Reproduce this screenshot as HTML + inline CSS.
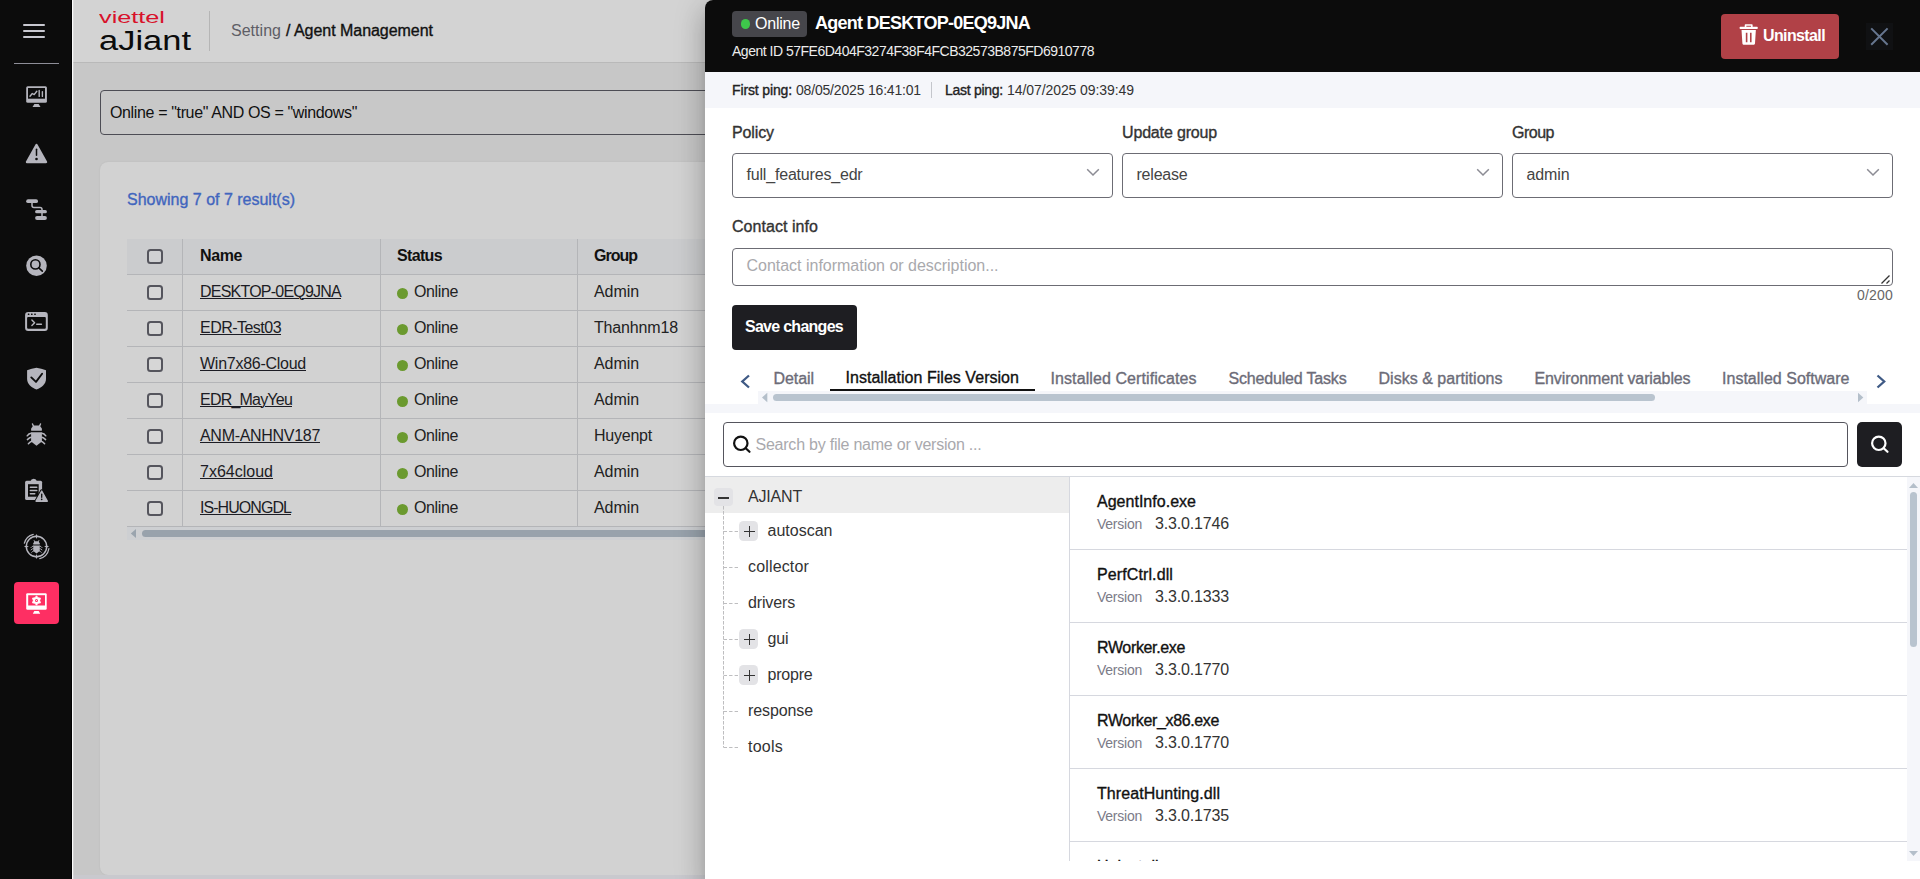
<!DOCTYPE html>
<html lang="en"><head><meta charset="utf-8"><title>Agent Management</title><style>
*{box-sizing:border-box;margin:0;padding:0}
html,body{width:1920px;height:879px;overflow:hidden}
body{position:relative;background:#c7c7c7;font-family:"Liberation Sans",sans-serif;color:#222}
.t{position:absolute;white-space:nowrap}
.a{position:absolute}
u{text-decoration:underline;text-underline-offset:1px;text-decoration-thickness:1px}
</style></head><body><div class="a" style="left:73px;top:0px;width:1847px;height:63px;background:#d3d3d3;border-bottom:1px solid #b9b9b9"></div><span class="t" style="left:99px;top:7px;font-size:17px;line-height:21px;color:#d8112a;transform-origin:0 50%;transform:scaleX(1.4858);">viettel</span><span class="t" style="left:99px;top:24px;font-size:27px;line-height:34px;color:#0b0b0b;transform-origin:0 50%;transform:scaleX(1.2767);">aJiant</span><div class="a" style="left:209px;top:11px;width:1px;height:40px;background:#b5b5b5"></div><span class="t" style="left:231px;top:21px;font-size:16px;line-height:20px;color:#5e5e66;letter-spacing:0.027px;">Setting</span><span class="t" style="left:286px;top:21px;font-size:16px;line-height:20px;color:#111;-webkit-text-stroke:0.35px #111;letter-spacing:-0.036px;">/ Agent Management</span><div class="a" style="left:100px;top:90px;width:700px;height:45px;border:1px solid #4d4d55;border-radius:4px;background:#c8c8c8"></div><span class="t" style="left:110px;top:103px;font-size:16px;line-height:20px;color:#111;letter-spacing:-0.361px;">Online = "true" AND OS = "windows"</span><div class="a" style="left:100px;top:162px;width:1900px;height:713px;background:#d2d2d2;border-radius:8px;box-shadow:0 0 2px rgba(0,0,0,0.08)"></div><span class="t" style="left:127px;top:190px;font-size:16px;line-height:20px;color:#4165be;-webkit-text-stroke:0.35px #4165be;letter-spacing:-0.003px;">Showing 7 of 7 result(s)</span><div class="a" style="left:127px;top:239px;width:700px;height:35px;background:#cbccce"></div><div class="a" style="left:127px;top:274px;width:700px;height:1px;background:#b4b5b8"></div><div class="a" style="left:127px;top:310px;width:700px;height:1px;background:#b4b5b8"></div><div class="a" style="left:127px;top:346px;width:700px;height:1px;background:#b4b5b8"></div><div class="a" style="left:127px;top:382px;width:700px;height:1px;background:#b4b5b8"></div><div class="a" style="left:127px;top:418px;width:700px;height:1px;background:#b4b5b8"></div><div class="a" style="left:127px;top:454px;width:700px;height:1px;background:#b4b5b8"></div><div class="a" style="left:127px;top:490px;width:700px;height:1px;background:#b4b5b8"></div><div class="a" style="left:127px;top:526px;width:700px;height:1px;background:#b4b5b8"></div><div class="a" style="left:182px;top:239px;width:1px;height:288px;background:#b4b5b8"></div><div class="a" style="left:380px;top:239px;width:1px;height:288px;background:#b4b5b8"></div><div class="a" style="left:577px;top:239px;width:1px;height:288px;background:#b4b5b8"></div><div class="a" style="left:147px;top:249px;width:16px;height:15px;border:2px solid #55555d;border-radius:3.5px;background:rgba(255,255,255,0.1)"></div><span class="t" style="left:200px;top:246px;font-size:16px;line-height:20px;color:#111;font-weight:700;letter-spacing:-0.395px;">Name</span><span class="t" style="left:397px;top:246px;font-size:16px;line-height:20px;color:#111;font-weight:700;letter-spacing:-0.651px;">Status</span><span class="t" style="left:594px;top:246px;font-size:16px;line-height:20px;color:#111;font-weight:700;letter-spacing:-1.000px;">Group</span><div class="a" style="left:147px;top:285px;width:16px;height:15px;border:2px solid #55555d;border-radius:3.5px;background:rgba(255,255,255,0.1)"></div><span class="t" style="left:200px;top:282px;font-size:16px;line-height:20px;color:#1c1c24;letter-spacing:-0.776px;"><u>DESKTOP-0EQ9JNA</u></span><div class="a" style="left:397px;top:287.5px;width:11px;height:11px;background:#6b9a2f;border-radius:50%"></div><span class="t" style="left:414px;top:282px;font-size:16px;line-height:20px;color:#222;letter-spacing:-0.375px;">Online</span><span class="t" style="left:594px;top:282px;font-size:16px;line-height:20px;color:#222;letter-spacing:-0.072px;">Admin</span><div class="a" style="left:147px;top:321px;width:16px;height:15px;border:2px solid #55555d;border-radius:3.5px;background:rgba(255,255,255,0.1)"></div><span class="t" style="left:200px;top:318px;font-size:16px;line-height:20px;color:#1c1c24;letter-spacing:-0.525px;"><u>EDR-Test03</u></span><div class="a" style="left:397px;top:323.5px;width:11px;height:11px;background:#6b9a2f;border-radius:50%"></div><span class="t" style="left:414px;top:318px;font-size:16px;line-height:20px;color:#222;letter-spacing:-0.375px;">Online</span><span class="t" style="left:594px;top:318px;font-size:16px;line-height:20px;color:#222;letter-spacing:-0.155px;">Thanhnm18</span><div class="a" style="left:147px;top:357px;width:16px;height:15px;border:2px solid #55555d;border-radius:3.5px;background:rgba(255,255,255,0.1)"></div><span class="t" style="left:200px;top:354px;font-size:16px;line-height:20px;color:#1c1c24;letter-spacing:-0.261px;"><u>Win7x86-Cloud</u></span><div class="a" style="left:397px;top:359.5px;width:11px;height:11px;background:#6b9a2f;border-radius:50%"></div><span class="t" style="left:414px;top:354px;font-size:16px;line-height:20px;color:#222;letter-spacing:-0.375px;">Online</span><span class="t" style="left:594px;top:354px;font-size:16px;line-height:20px;color:#222;letter-spacing:-0.072px;">Admin</span><div class="a" style="left:147px;top:393px;width:16px;height:15px;border:2px solid #55555d;border-radius:3.5px;background:rgba(255,255,255,0.1)"></div><span class="t" style="left:200px;top:390px;font-size:16px;line-height:20px;color:#1c1c24;letter-spacing:-0.791px;"><u>EDR_MayYeu</u></span><div class="a" style="left:397px;top:395.5px;width:11px;height:11px;background:#6b9a2f;border-radius:50%"></div><span class="t" style="left:414px;top:390px;font-size:16px;line-height:20px;color:#222;letter-spacing:-0.375px;">Online</span><span class="t" style="left:594px;top:390px;font-size:16px;line-height:20px;color:#222;letter-spacing:-0.072px;">Admin</span><div class="a" style="left:147px;top:429px;width:16px;height:15px;border:2px solid #55555d;border-radius:3.5px;background:rgba(255,255,255,0.1)"></div><span class="t" style="left:200px;top:426px;font-size:16px;line-height:20px;color:#1c1c24;letter-spacing:-0.299px;"><u>ANM-ANHNV187</u></span><div class="a" style="left:397px;top:431.5px;width:11px;height:11px;background:#6b9a2f;border-radius:50%"></div><span class="t" style="left:414px;top:426px;font-size:16px;line-height:20px;color:#222;letter-spacing:-0.375px;">Online</span><span class="t" style="left:594px;top:426px;font-size:16px;line-height:20px;color:#222;letter-spacing:-0.228px;">Huyenpt</span><div class="a" style="left:147px;top:465px;width:16px;height:15px;border:2px solid #55555d;border-radius:3.5px;background:rgba(255,255,255,0.1)"></div><span class="t" style="left:200px;top:462px;font-size:16px;line-height:20px;color:#1c1c24;letter-spacing:0.005px;"><u>7x64cloud</u></span><div class="a" style="left:397px;top:467.5px;width:11px;height:11px;background:#6b9a2f;border-radius:50%"></div><span class="t" style="left:414px;top:462px;font-size:16px;line-height:20px;color:#222;letter-spacing:-0.375px;">Online</span><span class="t" style="left:594px;top:462px;font-size:16px;line-height:20px;color:#222;letter-spacing:-0.072px;">Admin</span><div class="a" style="left:147px;top:501px;width:16px;height:15px;border:2px solid #55555d;border-radius:3.5px;background:rgba(255,255,255,0.1)"></div><span class="t" style="left:200px;top:498px;font-size:16px;line-height:20px;color:#1c1c24;letter-spacing:-0.945px;"><u>IS-HUONGDL</u></span><div class="a" style="left:397px;top:503.5px;width:11px;height:11px;background:#6b9a2f;border-radius:50%"></div><span class="t" style="left:414px;top:498px;font-size:16px;line-height:20px;color:#222;letter-spacing:-0.375px;">Online</span><span class="t" style="left:594px;top:498px;font-size:16px;line-height:20px;color:#222;letter-spacing:-0.072px;">Admin</span><div class="a" style="left:127px;top:527px;width:700px;height:13px;background:#cdcfd2"></div><svg class="a" style="left:130px;top:528px" width="8" height="11"><path d="M6 1 L0.800 5.500 L6 10 Z" fill="#9aa4ae"/></svg><div class="a" style="left:142px;top:530px;width:700px;height:7px;background:#98a2ac;border-radius:4px"></div><div class="a" style="left:73px;top:875px;width:1847px;height:4px;background:#c9c9ce"></div><div class="a" style="left:0px;top:0px;width:72px;height:879px;background:#0c0c0c"></div><div class="a" style="left:72px;top:0px;width:1px;height:879px;background:#fbfbfb"></div><div class="a" style="left:73px;top:0px;width:1px;height:879px;background:rgba(255,255,255,0.22)"></div><div class="a" style="left:71px;top:0px;width:1px;height:879px;background:#020202"></div><div class="a" style="left:22.5px;top:24px;width:22px;height:2px;background:#c8c8d0;border-radius:1px"></div><div class="a" style="left:22.5px;top:30px;width:22px;height:2px;background:#c8c8d0;border-radius:1px"></div><div class="a" style="left:22.5px;top:36px;width:22px;height:2px;background:#c8c8d0;border-radius:1px"></div><div class="a" style="left:14px;top:63px;width:45px;height:1px;background:#8e8e98"></div><div class="a" style="left:14px;top:582px;width:45px;height:42px;background:#fe2f63;border-radius:4px"></div><svg class="a" style="left:0;top:0" width="72" height="879" viewBox="0 0 72 879"><rect x="26.200" y="86.200" width="20.700" height="16.600" rx="1.500" fill="#b5b5bd"/><rect x="28" y="88" width="17" height="10.700" fill="#0c0c0c"/><path d="M30 96.200L32.300 93.500L34.200 94.600L36.800 91.200" stroke="#b5b5bd" stroke-width="1.400" fill="none" stroke-linecap="round" stroke-linejoin="round"/><path d="M39.200 90.400V96.400M42.400 91.600V96.400" stroke="#b5b5bd" stroke-width="1.400" stroke-linecap="round"/><path d="M34.400 104H38.600L40.500 107.100H32.500Z" fill="#b5b5bd"/><path d="M36.500 145L46 162H27Z" fill="#b5b5bd" stroke="#b5b5bd" stroke-width="2.400" stroke-linejoin="round"/><path d="M36.500 149.200V155.300" stroke="#0c0c0c" stroke-width="1.500" stroke-linecap="round"/><circle cx="36.500" cy="159" r="1.300" fill="#0c0c0c"/><rect x="26.200" y="199.300" width="11.800" height="3.700" rx="1.850" fill="#b5b5bd"/><rect x="35.100" y="210" width="11.800" height="3.300" rx="1.650" fill="#b5b5bd"/><rect x="35.100" y="216.100" width="11.800" height="3.900" rx="1.950" fill="#b5b5bd"/><path d="M32 203V205.500Q32 207.500 34 207.500H40Q42 207.500 42 209.500V217" stroke="#b5b5bd" stroke-width="1.500" fill="none"/><circle cx="36.500" cy="265.700" r="10.300" fill="#b5b5bd"/><circle cx="35.400" cy="264.400" r="4.600" stroke="#0c0c0c" stroke-width="1.600" fill="none"/><path d="M38.800 267.800L42.300 271.100" stroke="#0c0c0c" stroke-width="1.600" stroke-linecap="round"/><rect x="25.100" y="311.900" width="22.700" height="19.100" rx="3" fill="#b5b5bd"/><rect x="27.100" y="316.900" width="18.700" height="11.800" rx="1" fill="#0c0c0c"/><rect x="27.8" y="313.500" width="1.600" height="1.600" rx="0.500" fill="#0c0c0c"/><rect x="31.0" y="313.500" width="1.600" height="1.600" rx="0.500" fill="#0c0c0c"/><rect x="34.2" y="313.500" width="1.600" height="1.600" rx="0.500" fill="#0c0c0c"/><path d="M31.900 320.100L34.600 322.800L31.900 325.500" stroke="#b5b5bd" stroke-width="1.400" fill="none" stroke-linecap="round" stroke-linejoin="round"/><path d="M36.700 324.300H41.400" stroke="#b5b5bd" stroke-width="1.400" stroke-linecap="round"/><path d="M36.500 367.800C33.500 368.300 30 369.300 27.100 370.300V379C27.100 384 31.500 387.600 36.500 389.400C41.500 387.600 46 384 46 379V370.300C43 369.300 39.500 368.300 36.500 367.800Z" fill="#b5b5bd"/><path d="M31.300 377.400L36 381.900L42.100 373.800" stroke="#0c0c0c" stroke-width="1.900" fill="none" stroke-linecap="round" stroke-linejoin="round"/><path d="M33.40 425.40H39.60L41.90 428.50V430.20Q41.90 430.80 41.30 430.80H31.70Q31.10 430.80 31.10 430.20V428.50Z" fill="#b5b5bd"/><path d="M33.60 426.50L32.50 423.90M39.40 426.50L40.50 423.90" stroke="#b5b5bd" stroke-width="1.40" stroke-linecap="round"/><path d="M31.10 432.20H41.90V441.50L36.50 445.80L31.10 441.50Z" fill="#b5b5bd"/><path d="M31.10 433.20Q28.80 433.40 27.20 435.80M41.90 433.20Q44.20 433.40 45.80 435.80M31.10 437.30Q29.50 437.60 27.40 439.60M41.90 437.30Q43.50 437.60 45.60 439.60M31.80 441.20Q30.20 441.80 28.40 443.80M41.20 441.20Q42.80 441.80 44.60 443.80" stroke="#b5b5bd" stroke-width="1.50" fill="none" stroke-linecap="round"/><rect x="25.100" y="480.800" width="17" height="19.300" rx="1.500" fill="#b5b5bd"/><path d="M30.600 482V481.300Q30.900 478.900 33.700 478.800Q36.500 478.900 36.800 481.300V482Z" fill="#b5b5bd"/><rect x="28" y="484.200" width="10.700" height="12.500" fill="#0c0c0c"/><path d="M30.300 487.300H36.800M30.300 490.500H36.800M30.300 493.700H34.800" stroke="#b5b5bd" stroke-width="1.400" stroke-linecap="round"/><path d="M41.700 491L47.300 501.200H36.100Z" fill="#b5b5bd" stroke="#0c0c0c" stroke-width="3.400" stroke-linejoin="round"/><path d="M41.700 491L47.300 501.200H36.100Z" fill="#b5b5bd" stroke="#b5b5bd" stroke-width="1.400" stroke-linejoin="round"/><path d="M41.700 494.200V497.300" stroke="#0c0c0c" stroke-width="1.300" stroke-linecap="round"/><circle cx="41.700" cy="499.400" r="0.800" fill="#0c0c0c"/><circle cx="36.5" cy="546.5" r="10.200" stroke="#b5b5bd" stroke-width="1.400" fill="none"/><path d="M44.10 546.50L46.70 547.60L49.10 546.50L46.70 545.40Z" fill="#b5b5bd"/><path d="M36.50 554.10L35.40 556.70L36.50 559.10L37.60 556.70Z" fill="#b5b5bd"/><path d="M28.90 546.50L26.30 545.40L23.90 546.50L26.30 547.60Z" fill="#b5b5bd"/><path d="M36.50 538.90L37.60 536.30L36.50 533.90L35.40 536.30Z" fill="#b5b5bd"/><path d="M24.33 543.24A12.6 12.6 0 0 1 33.24 534.33M48.91 548.69A12.6 12.6 0 0 1 39.76 558.67" stroke="#b5b5bd" stroke-width="1.200" fill="none" stroke-linecap="round"/><path d="M34.64 541.34H38.36L39.74 543.20V544.22Q39.74 544.58 39.38 544.58H33.62Q33.26 544.58 33.26 544.22V543.20Z" fill="#b5b5bd"/><path d="M34.76 542.00L34.10 540.44M38.24 542.00L38.90 540.44" stroke="#b5b5bd" stroke-width="0.84" stroke-linecap="round"/><path d="M33.26 545.42H39.74V551.00L36.50 553.58L33.26 551.00Z" fill="#b5b5bd"/><path d="M33.26 546.02Q31.88 546.14 30.92 547.58M39.74 546.02Q41.12 546.14 42.08 547.58M33.26 548.48Q32.30 548.66 31.04 549.86M39.74 548.48Q40.70 548.66 41.96 549.86M33.68 550.82Q32.72 551.18 31.64 552.38M39.32 550.82Q40.28 551.18 41.36 552.38" stroke="#b5b5bd" stroke-width="0.90" fill="none" stroke-linecap="round"/><rect x="26.200" y="593.200" width="20.500" height="16.500" rx="1.200" fill="#fff"/><rect x="28.200" y="595.200" width="16.800" height="10.300" fill="#fe2f63"/><path d="M34.300 611.100H38.700L40.200 613.800H32.800Z" fill="#fff"/><path d="M36.50 595.80L38.10 597.73L40.57 598.15L39.70 600.50L40.57 602.85L38.10 603.27L36.50 605.20L34.90 603.27L32.43 602.85L33.30 600.50L32.43 598.15L34.90 597.73Z" fill="#fff" stroke="#fff" stroke-width="0.800" stroke-linejoin="round"/><circle cx="36.5" cy="600.5" r="1.500" fill="#fe2f63"/><circle cx="36.5" cy="600.5" r="0.600" fill="#fff"/></svg><div class="a" style="left:705px;top:0px;width:1215px;height:879px;background:#fff;border-top-left-radius:8px;box-shadow:0 8px 10px -5px rgba(0,0,0,.2),0 16px 24px 2px rgba(0,0,0,.14),0 6px 30px 5px rgba(0,0,0,.12)"></div><div class="a" style="left:705px;top:0px;width:1215px;height:72px;background:#0c0c0c;border-top-left-radius:8px"></div><div class="a" style="left:732px;top:11px;width:75px;height:26px;background:#46464b;border-radius:4px"></div><div class="a" style="left:740.5px;top:19px;width:9.5px;height:9.5px;background:#3ec74b;border-radius:50%"></div><span class="t" style="left:755px;top:14px;font-size:16px;line-height:20px;color:#fff;letter-spacing:-0.208px;">Online</span><span class="t" style="left:815px;top:12px;font-size:18px;line-height:22px;color:#fff;font-weight:700;letter-spacing:-0.749px;">Agent DESKTOP-0EQ9JNA</span><span class="t" style="left:732px;top:42px;font-size:14px;line-height:18px;color:#ececec;letter-spacing:-0.491px;">Agent ID 57FE6D404F3274F38F4FCB32573B875FD6910778</span><div class="a" style="left:1721px;top:14px;width:118px;height:45px;background:#b14147;border-radius:4px"></div><svg class="a" style="left:1737.800px;top:23.300px" width="21.400" height="23" viewBox="0 0 20 22" preserveAspectRatio="none"><path d="M7.2 1.2h5.6c.5 0 .9.4.9.9v1.4h4.1c.4 0 .7.3.7.7v.8c0 .4-.3.7-.7.7H2.200c-.4 0-.7-.3-.7-.7v-.8c0-.4.3-.7.7-.7h4.1V2.100c0-.5.4-.9.9-.9zm.6 1.400v.9h4.400v-.9zM3.300 6.700h13.400l-.8 12.700c-.05.9-.8 1.500-1.700 1.500H5.800c-.9 0-1.650-.6-1.700-1.500zM7.300 9.300v9h1.500v-9zm3.900 0v9h1.500v-9z" fill="#fff"/></svg><span class="t" style="left:1763px;top:26px;font-size:16px;line-height:20px;color:#fff;font-weight:700;letter-spacing:-0.618px;">Uninstall</span><div class="a" style="left:1866px;top:23px;width:27px;height:27px;background:#101113"></div><svg class="a" style="left:1869px;top:26px" width="21" height="21" viewBox="0 0 21 21"><path d="M2.200 2.400L18.600 18.800M18.600 2.400L2.200 18.800" stroke="#66768f" stroke-width="2" fill="none"/></svg><div class="a" style="left:705px;top:72px;width:1215px;height:36px;background:#f5f6fa"></div><span class="t" style="left:732px;top:81px;font-size:14px;line-height:18px;color:#222;-webkit-text-stroke:0.35px #222;letter-spacing:-0.134px;">First ping:</span><span class="t" style="left:796px;top:81px;font-size:14px;line-height:18px;color:#333;letter-spacing:-0.183px;">08/05/2025 16:41:01</span><div class="a" style="left:931px;top:82px;width:1px;height:16px;background:#c4c6cc"></div><span class="t" style="left:945px;top:81px;font-size:14px;line-height:18px;color:#222;-webkit-text-stroke:0.35px #222;letter-spacing:-0.272px;">Last ping:</span><span class="t" style="left:1007px;top:81px;font-size:14px;line-height:18px;color:#333;letter-spacing:-0.077px;">14/07/2025 09:39:49</span><span class="t" style="left:732px;top:123px;font-size:16px;line-height:20px;color:#333;-webkit-text-stroke:0.35px #333;letter-spacing:-0.115px;">Policy</span><div class="a" style="left:732px;top:153px;width:381px;height:45px;border:1px solid #6c6c74;border-radius:4px;background:#fff"></div><span class="t" style="left:746.5px;top:165px;font-size:16px;line-height:20px;color:#444;letter-spacing:-0.188px;">full_features_edr</span><svg class="a" style="left:1086px;top:168px" width="14" height="9" viewBox="0 0 14 9"><path d="M1.200 1.200L7 7L12.800 1.200" stroke="#8c8c94" stroke-width="1.500" fill="none"/></svg><span class="t" style="left:1122px;top:123px;font-size:16px;line-height:20px;color:#333;-webkit-text-stroke:0.35px #333;letter-spacing:-0.164px;">Update group</span><div class="a" style="left:1122px;top:153px;width:381px;height:45px;border:1px solid #6c6c74;border-radius:4px;background:#fff"></div><span class="t" style="left:1136.5px;top:165px;font-size:16px;line-height:20px;color:#444;letter-spacing:-0.212px;">release</span><svg class="a" style="left:1476px;top:168px" width="14" height="9" viewBox="0 0 14 9"><path d="M1.200 1.200L7 7L12.800 1.200" stroke="#8c8c94" stroke-width="1.500" fill="none"/></svg><span class="t" style="left:1512px;top:123px;font-size:16px;line-height:20px;color:#333;-webkit-text-stroke:0.35px #333;letter-spacing:-0.494px;">Group</span><div class="a" style="left:1512px;top:153px;width:381px;height:45px;border:1px solid #6c6c74;border-radius:4px;background:#fff"></div><span class="t" style="left:1526.5px;top:165px;font-size:16px;line-height:20px;color:#444;letter-spacing:-0.116px;">admin</span><svg class="a" style="left:1866px;top:168px" width="14" height="9" viewBox="0 0 14 9"><path d="M1.200 1.200L7 7L12.800 1.200" stroke="#8c8c94" stroke-width="1.500" fill="none"/></svg><span class="t" style="left:732px;top:217px;font-size:16px;line-height:20px;color:#333;-webkit-text-stroke:0.35px #333;letter-spacing:0.051px;">Contact info</span><div class="a" style="left:732px;top:248px;width:1161px;height:38px;border:1px solid #6c6c74;border-radius:4px;background:#fff"></div><span class="t" style="left:746.5px;top:256px;font-size:16px;line-height:20px;color:#a9a9ad;letter-spacing:-0.015px;">Contact information or description...</span><svg class="a" style="left:1880px;top:273px" width="12" height="12" viewBox="0 0 12 12"><path d="M1.500 10.500L9.500 2.500M6.500 10.500L9.500 7.500" stroke="#333" stroke-width="1.300" fill="none"/></svg><span class="t" style="right:27px;top:286px;font-size:14px;line-height:18px;color:#666;letter-spacing:0.191px;">0/200</span><div class="a" style="left:732px;top:305px;width:125px;height:45px;background:#1e1e22;border-radius:4px"></div><span class="t" style="left:745px;top:317px;font-size:16px;line-height:20px;color:#fff;font-weight:700;letter-spacing:-0.728px;">Save changes</span><svg class="a" style="left:738px;top:370px" width="14" height="20" viewBox="0 0 14 20"><path d="M11 5.500L4.300 11.500L11 17.500" stroke="#3f5a85" stroke-width="2.300" fill="none"/></svg><svg class="a" style="left:1874px;top:370px" width="14" height="20" viewBox="0 0 14 20"><path d="M3.500 5.500L10.200 11.500L3.500 17.500" stroke="#3f5a85" stroke-width="2.300" fill="none"/></svg><span class="t" style="left:773.5px;top:369px;font-size:16px;line-height:20px;color:#6c6c78;-webkit-text-stroke:0.35px #6c6c78;letter-spacing:-0.068px;">Detail</span><span class="t" style="left:845.5px;top:368px;font-size:16px;line-height:20px;color:#111;-webkit-text-stroke:0.35px #111;letter-spacing:0.037px;">Installation Files Version</span><span class="t" style="left:1050.5px;top:369px;font-size:16px;line-height:20px;color:#6c6c78;-webkit-text-stroke:0.35px #6c6c78;letter-spacing:0.088px;">Installed Certificates</span><span class="t" style="left:1228.5px;top:369px;font-size:16px;line-height:20px;color:#6c6c78;-webkit-text-stroke:0.35px #6c6c78;letter-spacing:-0.178px;">Scheduled Tasks</span><span class="t" style="left:1378.5px;top:369px;font-size:16px;line-height:20px;color:#6c6c78;-webkit-text-stroke:0.35px #6c6c78;letter-spacing:0.023px;">Disks &amp; partitions</span><span class="t" style="left:1534.5px;top:369px;font-size:16px;line-height:20px;color:#6c6c78;-webkit-text-stroke:0.35px #6c6c78;letter-spacing:-0.109px;">Environment variables</span><span class="t" style="left:1722px;top:369px;font-size:16px;line-height:20px;color:#6c6c78;-webkit-text-stroke:0.35px #6c6c78;letter-spacing:0.017px;">Installed Software</span><div class="a" style="left:830px;top:388.5px;width:204.5px;height:2px;background:#111"></div><div class="a" style="left:758px;top:391px;width:1108.5px;height:13px;background:#f5f6fa"></div><div class="a" style="left:705px;top:404px;width:1215px;height:8.5px;background:#f5f6fa"></div><svg class="a" style="left:761px;top:392px" width="8" height="11"><path d="M6.300 0.800 L1 5.500 L6.300 10.200 Z" fill="#b4bfca"/></svg><svg class="a" style="left:1857px;top:392px" width="8" height="11"><path d="M1 0.800 L6.300 5.500 L1 10.200 Z" fill="#b4bfca"/></svg><div class="a" style="left:773px;top:394px;width:882px;height:7px;background:#b9c4cf;border-radius:4px"></div><div class="a" style="left:723px;top:422px;width:1125px;height:45px;border:1px solid #55555d;border-radius:4px;background:#fff"></div><svg class="a" style="left:731px;top:433px" width="22" height="22" viewBox="0 0 22 22"><circle cx="9.800" cy="10.300" r="6.700" stroke="#111" stroke-width="2.200" fill="none"/><path d="M14.700 15.200L18.500 18.800" stroke="#111" stroke-width="2.200" stroke-linecap="round"/></svg><span class="t" style="left:755.5px;top:435px;font-size:16px;line-height:20px;color:#a9a9ad;letter-spacing:-0.232px;">Search by file name or version ...</span><div class="a" style="left:1857px;top:422px;width:45px;height:45px;background:#1e1e22;border-radius:5px"></div><svg class="a" style="left:1869px;top:433px" width="22" height="22" viewBox="0 0 22 22"><circle cx="9.800" cy="10.300" r="6.700" stroke="#fff" stroke-width="2.200" fill="none"/><path d="M14.700 15.200L18.500 18.800" stroke="#fff" stroke-width="2.200" stroke-linecap="round"/></svg><div class="a" style="left:705px;top:476px;width:1215px;height:1px;background:#d6d9df"></div><div class="a" style="left:705px;top:477px;width:364px;height:36px;background:#ededed"></div><div class="a" style="left:1069px;top:477px;width:1px;height:384px;background:#d6d8df"></div><div class="a" style="left:714px;top:488.2px;width:19px;height:17.5px;background:#e3e3e6;border-radius:4px"></div><div class="a" style="left:718px;top:496.5px;width:11.2px;height:2px;background:#333"></div><span class="t" style="left:748px;top:487px;font-size:16px;line-height:20px;color:#333;letter-spacing:-0.188px;">AJIANT</span><svg class="a" style="left:720px;top:506px" width="20" height="244" viewBox="0 0 20 244"><g stroke="#bebec0" stroke-width="1" fill="none"><path d="M3.500 0V241.500" stroke-dasharray="3.600 1.400"/><path d="M3.600 25.5H18" stroke-dasharray="3.400 2.100"/><path d="M3.600 61.5H18" stroke-dasharray="3.400 2.100"/><path d="M3.600 97.5H18" stroke-dasharray="3.400 2.100"/><path d="M3.600 133.5H18" stroke-dasharray="3.400 2.100"/><path d="M3.600 169.5H18" stroke-dasharray="3.400 2.100"/><path d="M3.600 205.5H18" stroke-dasharray="3.400 2.100"/><path d="M3.600 241.5H18" stroke-dasharray="3.400 2.100"/></g></svg><div class="a" style="left:738px;top:521px;width:22px;height:20px;background:#fff"></div><div class="a" style="left:739px;top:521px;width:19px;height:19.7px;background:#e3e3e6;border-radius:4.500px"></div><div class="a" style="left:743.7px;top:530.6px;width:11.2px;height:1.6px;background:#333"></div><div class="a" style="left:748.5px;top:525.8px;width:1.6px;height:11.2px;background:#333"></div><span class="t" style="left:767.5px;top:521px;font-size:16px;line-height:20px;color:#333;letter-spacing:0.008px;">autoscan</span><div class="a" style="left:740px;top:559.5px;width:6px;height:16px;background:#fff"></div><span class="t" style="left:748px;top:557px;font-size:16px;line-height:20px;color:#333;letter-spacing:0.158px;">collector</span><div class="a" style="left:740px;top:595.5px;width:6px;height:16px;background:#fff"></div><span class="t" style="left:748px;top:593px;font-size:16px;line-height:20px;color:#333;letter-spacing:-0.145px;">drivers</span><div class="a" style="left:738px;top:629px;width:22px;height:20px;background:#fff"></div><div class="a" style="left:739px;top:629px;width:19px;height:19.7px;background:#e3e3e6;border-radius:4.500px"></div><div class="a" style="left:743.7px;top:638.6px;width:11.2px;height:1.6px;background:#333"></div><div class="a" style="left:748.5px;top:633.8px;width:1.6px;height:11.2px;background:#333"></div><span class="t" style="left:767.5px;top:629px;font-size:16px;line-height:20px;color:#333;letter-spacing:-0.120px;">gui</span><div class="a" style="left:738px;top:665px;width:22px;height:20px;background:#fff"></div><div class="a" style="left:739px;top:665px;width:19px;height:19.7px;background:#e3e3e6;border-radius:4.500px"></div><div class="a" style="left:743.7px;top:674.6px;width:11.2px;height:1.6px;background:#333"></div><div class="a" style="left:748.5px;top:669.8px;width:1.6px;height:11.2px;background:#333"></div><span class="t" style="left:767.5px;top:665px;font-size:16px;line-height:20px;color:#333;letter-spacing:-0.208px;">propre</span><div class="a" style="left:740px;top:703.5px;width:6px;height:16px;background:#fff"></div><span class="t" style="left:748px;top:701px;font-size:16px;line-height:20px;color:#333;letter-spacing:-0.104px;">response</span><div class="a" style="left:740px;top:739.5px;width:6px;height:16px;background:#fff"></div><span class="t" style="left:748px;top:737px;font-size:16px;line-height:20px;color:#333;letter-spacing:0.241px;">tools</span><div class="a" style="left:1070px;top:477px;width:837px;height:384px;overflow:hidden"><span class="t" style="left:27px;top:15px;font-size:16px;line-height:20px;color:#111;-webkit-text-stroke:0.35px #111;letter-spacing:0.019px;">AgentInfo.exe</span><span class="t" style="left:27px;top:38px;font-size:14px;line-height:18px;color:#7b7b88;letter-spacing:-0.243px;">Version</span><span class="t" style="left:85px;top:37px;font-size:16px;line-height:20px;color:#333;letter-spacing:-0.163px;">3.3.0.1746</span><div class="a" style="left:0px;top:72px;width:837px;height:1px;background:#d6d8df"></div><span class="t" style="left:27px;top:88px;font-size:16px;line-height:20px;color:#111;-webkit-text-stroke:0.35px #111;letter-spacing:0.109px;">PerfCtrl.dll</span><span class="t" style="left:27px;top:111px;font-size:14px;line-height:18px;color:#7b7b88;letter-spacing:-0.243px;">Version</span><span class="t" style="left:85px;top:110px;font-size:16px;line-height:20px;color:#333;letter-spacing:-0.163px;">3.3.0.1333</span><div class="a" style="left:0px;top:145px;width:837px;height:1px;background:#d6d8df"></div><span class="t" style="left:27px;top:161px;font-size:16px;line-height:20px;color:#111;-webkit-text-stroke:0.35px #111;letter-spacing:-0.354px;">RWorker.exe</span><span class="t" style="left:27px;top:184px;font-size:14px;line-height:18px;color:#7b7b88;letter-spacing:-0.243px;">Version</span><span class="t" style="left:85px;top:183px;font-size:16px;line-height:20px;color:#333;letter-spacing:-0.163px;">3.3.0.1770</span><div class="a" style="left:0px;top:218px;width:837px;height:1px;background:#d6d8df"></div><span class="t" style="left:27px;top:234px;font-size:16px;line-height:20px;color:#111;-webkit-text-stroke:0.35px #111;letter-spacing:-0.365px;">RWorker_x86.exe</span><span class="t" style="left:27px;top:257px;font-size:14px;line-height:18px;color:#7b7b88;letter-spacing:-0.243px;">Version</span><span class="t" style="left:85px;top:256px;font-size:16px;line-height:20px;color:#333;letter-spacing:-0.163px;">3.3.0.1770</span><div class="a" style="left:0px;top:291px;width:837px;height:1px;background:#d6d8df"></div><span class="t" style="left:27px;top:307px;font-size:16px;line-height:20px;color:#111;-webkit-text-stroke:0.35px #111;letter-spacing:0.068px;">ThreatHunting.dll</span><span class="t" style="left:27px;top:330px;font-size:14px;line-height:18px;color:#7b7b88;letter-spacing:-0.243px;">Version</span><span class="t" style="left:85px;top:329px;font-size:16px;line-height:20px;color:#333;letter-spacing:-0.163px;">3.3.0.1735</span><div class="a" style="left:0px;top:364px;width:837px;height:1px;background:#d6d8df"></div><span class="t" style="left:27px;top:380px;font-size:16px;line-height:20px;color:#111;-webkit-text-stroke:0.35px #111;letter-spacing:0.030px;">Uninstall.exe</span><span class="t" style="left:27px;top:403px;font-size:14px;line-height:18px;color:#7b7b88;letter-spacing:-0.243px;">Version</span><span class="t" style="left:85px;top:402px;font-size:16px;line-height:20px;color:#333;letter-spacing:-0.163px;">3.3.0.1735</span></div><div class="a" style="left:1907px;top:477px;width:13px;height:384px;background:#f5f6fa"></div><svg class="a" style="left:1908px;top:481.500px" width="11" height="7"><path d="M1 6 L5.500 1 L10 6 Z" fill="#b4bfca"/></svg><svg class="a" style="left:1908px;top:850px" width="11" height="7"><path d="M1 1 L5.500 6 L10 1 Z" fill="#b4bfca"/></svg><div class="a" style="left:1910px;top:492px;width:7px;height:155px;background:#b9c4cf;border-radius:4px"></div></body></html>
